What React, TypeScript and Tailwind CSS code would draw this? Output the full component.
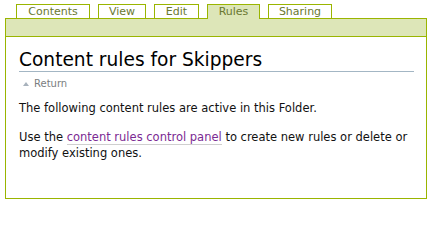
import React from "react";

const tabs = [
  { label: "Contents", w: "w-[74px]" },
  { label: "View", w: "w-[48px]" },
  { label: "Edit", w: "w-[45px]" },
  { label: "Rules", w: "w-[53px]" },
  { label: "Sharing", w: "w-[64px]" },
];

export default function App() {
  return (
    <div
      className="w-[432px] h-[203px] bg-white overflow-hidden"
      style={{ fontFamily: '"DejaVu Sans", Verdana, sans-serif' }}
    >
      <div className="pt-[4px] pl-[5px] pr-[5px]">
        <div className="flex gap-[8px] pl-[11px] h-[15px] items-stretch relative z-10">
          {tabs.map((t) => {
            const active = t.label === "Rules";
            return (
              <div
                key={t.label}
                className={
                  t.w +
                  " border border-[#9ab500] text-center text-[11px] leading-[13px] text-[#6a7831] h-[15px] " +
                  (active ? "bg-[#dde6b8] border-b-0" : "bg-white")
                }
              >
                {t.label}
              </div>
            );
          })}
        </div>
        <div className="border border-[#9ab500] -mt-px h-[181px]">
          <div className="h-[18px] bg-[#dde6b8] border-b border-[#9ab500]" />
          <div className="pl-[13px] pr-[12px]">
            <h1 className="mt-[12px] text-[18.6px] leading-[22px] text-black border-b border-[#a3b6c4]">
              Content rules for Skippers
            </h1>
            <div className="mt-[5px] flex items-center gap-[5px] pl-[4px] text-[10px] leading-[14px] text-[#7a7d80]">
              <svg width="6" height="4" viewBox="0 0 6 4">
                <polygon points="3,0 6,4 0,4" fill="#a8b2bc" />
              </svg>
              <span>Return</span>
            </div>
            <p className="mt-[9px] text-[11.5px] leading-[16px] text-[#111]">
              The following content rules are active in this Folder.
            </p>
            <p className="mt-[13px] text-[11.5px] leading-[16px] text-[#111]">
              Use the{" "}
              <a className="text-[#7b2a93] border-b border-[#cfcfcf]">content rules control panel</a>{" "}
              to create new rules or delete or modify existing ones.
            </p>
          </div>
        </div>
      </div>
    </div>
  );
}
